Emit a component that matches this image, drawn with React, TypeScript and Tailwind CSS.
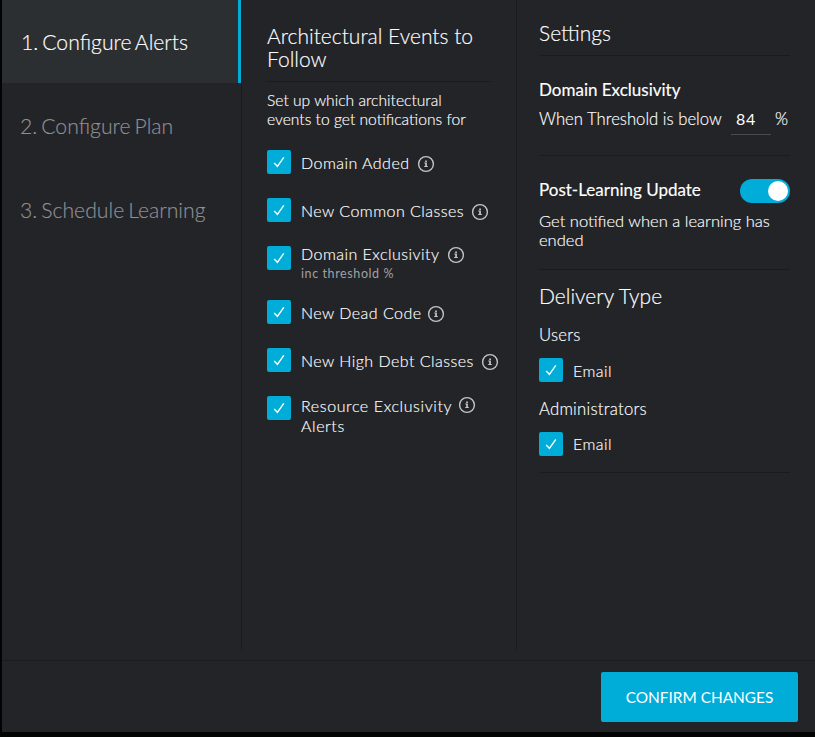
import { useState } from "react";

function Checkbox() {
  const [on, setOn] = useState(true);
  return (
    <button
      type="button"
      role="checkbox"
      aria-checked={on}
      aria-label="Toggle"
      onClick={() => setOn(!on)}
      className="flex size-6 shrink-0 items-center justify-center rounded-[2px] bg-[#00acd8]"
    >
      {on && (
        <svg width="12" height="12" viewBox="0 0 12 12" fill="none" stroke="white" strokeWidth="1.4">
          <path d="M1.2 6.9 4.4 10.3 10.8 1.3" />
        </svg>
      )}
    </button>
  );
}

function InfoIcon({ className = "" }: { className?: string }) {
  return (
    <svg className={`shrink-0 ${className}`} width="18" height="18" viewBox="0 0 18 18" fill="none">
      <circle cx="9" cy="9" r="7.4" stroke="#c4c5c6" strokeWidth="1.4" />
      <path d="M8.2 5.4h1.7v1.5H8.2zM7.3 7.6h2.6v3.5h.9v1H7.2v-1h1V8.6h-.9z" fill="#c4c5c6" />
    </svg>
  );
}

function Steps() {
  return (
    <nav className="flex w-[239px] shrink-0 flex-col text-[21.2px] leading-[26px] font-light [word-spacing:-1.75px]">
      <div className="h-[83px] border-r-[3px] border-[#00acd8] bg-[#2c2f32] pt-[29px] pl-[19px] text-white">
        <span className="inline-block whitespace-nowrap">1. Configure Alerts</span>
      </div>
      <div className="h-[84px] pt-[30px] pl-[18px] text-[#8f9094]">
        <span className="inline-block whitespace-nowrap">2. Configure Plan</span>
      </div>
      <div className="h-[84px] pt-[30px] pl-[18px] text-[#8f9094]">
        <span className="inline-block whitespace-nowrap">3. Schedule Learning</span>
      </div>
    </nav>
  );
}

const label = "text-[16px] leading-5 font-light tracking-[0.47px] whitespace-nowrap";

function Events() {
  return (
    <section className="h-[650px] w-[276px] shrink-0 border-x border-[#1a1b1e] pt-6 pl-[25px]">
      <h2 className="h-[58px] w-[224px] border-b border-[#1a1b1e] text-[21px] leading-[23px] font-light whitespace-nowrap">
        Architectural Events to
        <br />
        Follow
      </h2>
      <p className="pt-[9px] text-[15.65px] leading-[19px] font-light whitespace-nowrap">
        Set up which architectural
        <br />
        events to get notifications for
      </p>
      <div className="mt-[21px] flex flex-col">
        <div className="flex h-12">
          <Checkbox />
          <span className={`mt-[3px] ml-[10px] w-[108px] ${label}`}>Domain Added</span>
          <InfoIcon className="mt-[5px] ml-2" />
        </div>
        <div className="flex h-12">
          <Checkbox />
          <span className={`mt-[3px] ml-[10px] w-[162px] ${label}`}>New Common Classes</span>
          <InfoIcon className="mt-[5px] ml-2" />
        </div>
        <div className="flex h-[54px]">
          <Checkbox />
          <div className="-mt-[2px] ml-[10px] w-[139px]">
            <div className={label}>Domain Exclusivity</div>
            <div className="pt-[2px] text-[12.5px] leading-4 tracking-[0.6px] whitespace-nowrap text-[#a0a1a3] [-webkit-text-stroke:0]">
              inc threshold %
            </div>
          </div>
          <InfoIcon className="ml-[7px]" />
        </div>
        <div className="flex h-12">
          <Checkbox />
          <span className={`mt-[3px] ml-[10px] w-[118px] ${label}`}>New Dead Code</span>
          <InfoIcon className="mt-[5px] ml-2" />
        </div>
        <div className="flex h-12">
          <Checkbox />
          <span className={`mt-[3px] ml-[10px] w-[172px] ${label}`}>New High Debt Classes</span>
          <InfoIcon className="mt-[5px] ml-2" />
        </div>
        <div className="flex">
          <Checkbox />
          <span className="ml-[10px] w-[150px] text-[16px] leading-5 font-light tracking-[0.6px] whitespace-nowrap">
            Resource Exclusivity
            <br />
            Alerts
          </span>
          <InfoIcon className="ml-[7px]" />
        </div>
      </div>
    </section>
  );
}

function Settings() {
  const [on, setOn] = useState(true);
  return (
    <section className="ml-[22px] w-[251px] shrink-0 pt-[21px] text-[16px] font-light whitespace-nowrap">
      <h2 className="h-[35px] border-b border-[#1a1b1e] text-[21px] leading-[23px]">Settings</h2>
      <div className="h-[100px] border-b border-[#1a1b1e] pt-6">
        <h3 className="text-[17px] leading-5 font-normal">Domain Exclusivity</h3>
        <div className="flex h-[35px] items-start pt-2 text-[16.7px] leading-[23px]">
          <span className="w-[192px]">When Threshold is below</span>
          <span className="h-[27px] w-10 border-b border-[#4a4b4e] pl-[5px] text-[16px] leading-[22px] font-normal tracking-[0.8px] [-webkit-text-stroke:0]">84</span>
          <span className="ml-[4px]">%</span>
        </div>
      </div>
      <div className="h-[114px] border-b border-[#1a1b1e] pt-[23px]">
        <div className="flex justify-between">
          <h3 className="pt-px text-[17px] leading-5 font-normal">Post-Learning Update</h3>
          <button
            type="button"
            role="switch"
            aria-checked={on}
            aria-label="Post-Learning Update"
            onClick={() => setOn(!on)}
            className={`flex h-6 w-[50px] items-center rounded-full bg-[#00acd8] px-[2px] ${on ? "justify-end" : "justify-start"}`}
          >
            <span className="size-5 rounded-full bg-white" />
          </button>
        </div>
        <p className="mt-[9px] text-[16.55px] leading-[19px]">
          Get notified when a learning has
          <br />
          ended
        </p>
      </div>
      <div className="h-[203px] border-b border-[#1a1b1e] pt-[14px]">
        <h2 className="text-[21px] leading-[23px]">Delivery Type</h2>
        <h3 className="mt-[19px] text-[16.7px] leading-[19px] tracking-[0.25px]">Users</h3>
        <div className="mt-[13px] flex h-6">
          <Checkbox />
          <span className={`mt-[3px] ml-[10px] ${label}`}>Email</span>
        </div>
        <h3 className="mt-[18px] text-[16.7px] leading-[19px] tracking-[0.25px]">Administrators</h3>
        <div className="mt-[13px] flex h-6">
          <Checkbox />
          <span className={`mt-[2px] ml-[10px] ${label}`}>Email</span>
        </div>
      </div>
    </section>
  );
}

export default function App() {
  return (
    <div className="h-[737px] w-[815px] overflow-hidden bg-[#020303] pl-[2px] font-['Lato',sans-serif] text-white [-webkit-text-stroke:0.15px]">
      <main className="flex h-[732px] flex-col bg-[#232428]">
        <div className="flex h-[660px]">
          <Steps />
          <Events />
          <Settings />
        </div>
        <footer className="flex h-[72px] justify-end border-t border-[#1a1b1e] pt-[11px] pr-[17px]">
          <button
            type="button"
            className="h-[50px] w-[197px] rounded-[2px] bg-[#00acd8] text-[15.4px] leading-5 font-normal whitespace-nowrap [-webkit-text-stroke:0]"
          >
            CONFIRM CHANGES
          </button>
        </footer>
      </main>
    </div>
  );
}
